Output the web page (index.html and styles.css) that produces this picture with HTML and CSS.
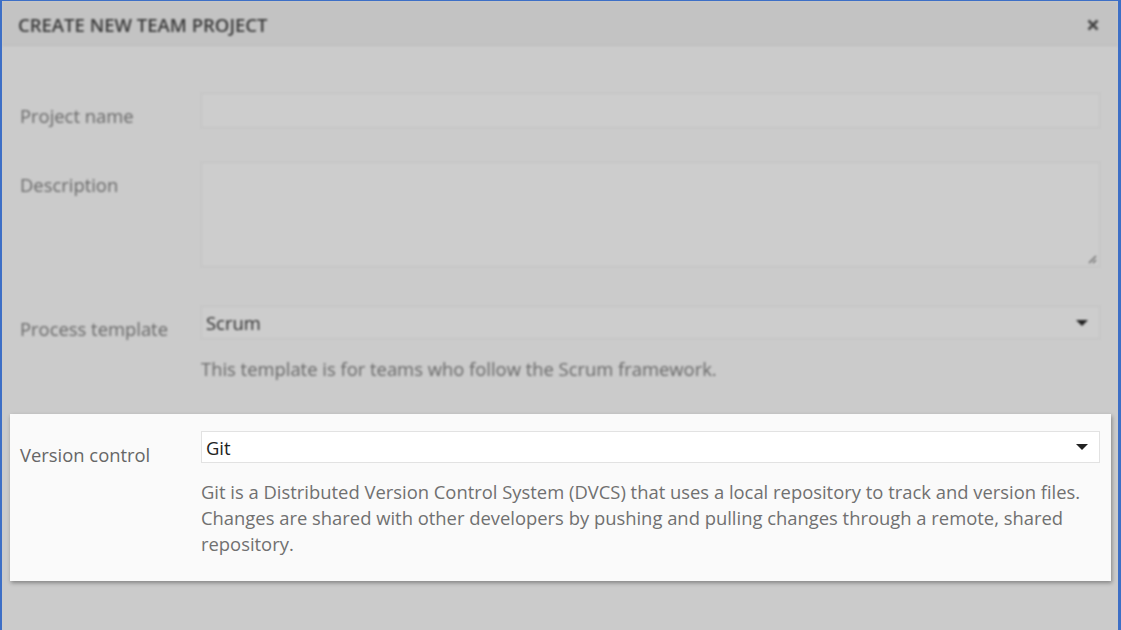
FILE: index.html
```html
<!DOCTYPE html>
<html lang="en">
  <head>
    <meta charset="UTF-8" />
    <meta name="viewport" content="width=device-width, initial-scale=1.0" />
    <title>Create new team project</title>
    <link rel="stylesheet" href="styles.css">
  </head>
  <body>
    <div class="window">
      <div class="header dim">
        <h1>CREATE NEW TEAM PROJECT</h1>
        <svg class="close" width="12" height="12" viewBox="0 0 12 12">
          <path d="M1.5 1.5 L10.5 10.5 M10.5 1.5 L1.5 10.5" stroke="#444" stroke-width="2.6" fill="none" />
        </svg>
      </div>

      <div class="form">
        <div class="row row-name dim">
          <label>Project name</label>
          <div class="field"><div class="input"></div></div>
        </div>

        <div class="row row-desc dim">
          <label>Description</label>
          <div class="field">
            <div class="textarea">
              <svg class="grip" width="10" height="10" viewBox="0 0 10 10">
                <path d="M9 2 L2 9 M9 6 L6 9" stroke="#666" stroke-width="1.3" fill="none" />
              </svg>
            </div>
          </div>
        </div>

        <div class="row row-template dim">
          <label>Process template</label>
          <div class="field">
            <div class="select"><span>Scrum</span><i class="caret"></i></div>
            <p class="hint">This template is for teams who follow the Scrum framework.</p>
          </div>
        </div>

        <div class="row highlight">
          <label>Version control</label>
          <div class="field">
            <div class="select white"><span>Git</span><i class="caret"></i></div>
            <p class="hint">Git is a Distributed Version Control System (DVCS) that uses a local repository to track and version files. Changes are shared with other developers by pushing and pulling changes through a remote, shared repository.</p>
          </div>
        </div>
      </div>
    </div>
  </body>
</html>
```

FILE: styles.css
```css
html, body {
  margin: 0;
  height: 100%;
  background: #cbcbcb;
}
body {
  font-family: "Open Sans", "Noto Sans", sans-serif;
  color: #666;
}
.window {
  box-sizing: border-box;
  height: 630px;
  border-left: 2px solid #3d6fc6;
  border-right: 3px solid #3d6fc6;
  border-top: 1px solid #3d6fc6;
  background: #cbcbcb;
  overflow: hidden;
}
.dim {
  filter: blur(1.1px);
}
.header {
  box-sizing: border-box;
  height: 45px;
  background: #c3c3c3;
  border-bottom: 1px solid #bbbbbb;
  display: flex;
  align-items: center;
  justify-content: space-between;
  padding: 3px 19px 0 16px;
}
.header h1 {
  margin: 0;
  font-size: 18.5px;
  font-weight: 600;
  color: #3a3a3a;
}
.form {
  padding: 47px 18px 0 18px;
}
.row {
  display: grid;
  grid-template-columns: 181px 1fr;
}
.row label {
  padding-top: 11px;
  line-height: 24px;
  font-size: 18.4px;
  color: #686868;
}
.row-name {
  margin-bottom: 34px;
}
.row-desc {
  margin-bottom: 39px;
}
.row-template {
  margin-bottom: 33px;
}
.input {
  height: 33px;
  border: 1px solid #c1c1c1;
  background: #cdcdcd;
}
.textarea {
  position: relative;
  height: 103px;
  border: 1px solid #c1c1c1;
  background: #cdcdcd;
}
.grip {
  position: absolute;
  right: 2px;
  bottom: 2px;
}
.select {
  height: 31px;
  border: 1px solid #c1c1c1;
  background: #cdcdcd;
  display: flex;
  align-items: center;
  justify-content: space-between;
  padding: 0 11px 0 4px;
  font-size: 18.4px;
  color: #2e2e2e;
}
.select.white {
  height: 30px;
  background: #fff;
  border-color: #e2e2e2;
  color: #222;
}
.caret {
  width: 0;
  height: 0;
  border-left: 6px solid transparent;
  border-right: 6px solid transparent;
  border-top: 6px solid #222;
}
.hint {
  margin: 18px 0 0 0;
  font-size: 18.4px;
  line-height: 24px;
  color: #686868;
}
.highlight {
  margin: 0 -11px 0 -10px;
  padding: 17px 11px 24px 10px;
  background: #fafafa;
  box-shadow: 1px 2px 4px rgba(0, 0, 0, 0.35);
}
.highlight .hint {
  margin-top: 16px;
  line-height: 26px;
  color: #707070;
}
.highlight label {
  padding-top: 12px;
  color: #666;
}
```
